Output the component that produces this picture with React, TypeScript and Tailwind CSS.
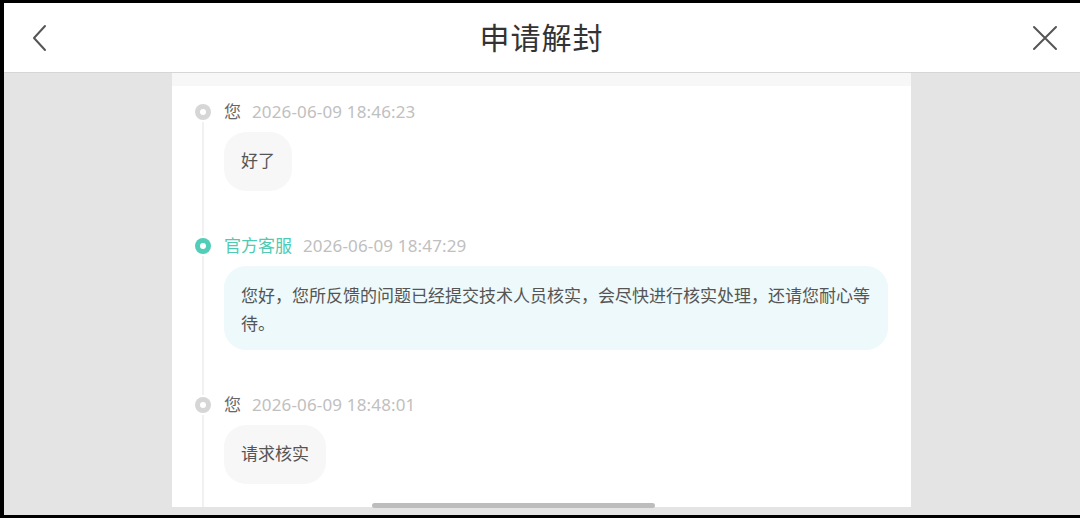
import React from "react";

type Msg = {
  who: string;
  staff?: boolean;
  time: string;
  text: string;
};

const messages: Msg[] = [
  { who: "您", time: "2026-06-09 18:46:23", text: "好了" },
  {
    who: "官方客服",
    staff: true,
    time: "2026-06-09 18:47:29",
    text: "您好，您所反馈的问题已经提交技术人员核实，会尽快进行核实处理，还请您耐心等待。",
  },
  { who: "您", time: "2026-06-09 18:48:01", text: "请求核实" },
];

function Dot({ staff }: { staff?: boolean }) {
  return (
    <div
      className={`w-[16px] h-[16px] rounded-full flex items-center justify-center shrink-0 ${
        staff ? "bg-[#52cdb7]" : "bg-[#d6d6d6]"
      }`}
    >
      <div className="w-[6px] h-[6px] rounded-full bg-white" />
    </div>
  );
}

function Item({ m, last }: { m: Msg; last: boolean }) {
  return (
    <div className="flex">
      <div className="w-[16px] flex flex-col items-center shrink-0">
        <div className="h-[20px] flex items-center">
          <Dot staff={m.staff} />
        </div>
        <div className="w-[2px] flex-1 bg-[#f1f1f1]" />
      </div>
      <div className={`ml-[13px] flex flex-col items-start ${last ? "pb-[30px]" : "pb-[45px]"}`}>
        <div className="h-[20px] flex items-center text-[17px] leading-[20px]">
          <span className={m.staff ? "text-[#4fcab4]" : "text-[#666666]"}>{m.who}</span>
          <span className="ml-[11px] text-[#c0c0c0] tracking-[0.15px]">{m.time}</span>
        </div>
        <div
          className={`mt-[10px] rounded-[22px] px-[17px] text-[17px] leading-[28px] text-[#555555] ${
            m.staff
              ? "w-[664px] bg-[#edf9fa] pt-[16px] pb-[12px]"
              : "bg-[#f7f7f7] pt-[15px] pb-[16px]"
          }`}
        >
          {m.text}
        </div>
      </div>
    </div>
  );
}

export default function App() {
  return (
    <div
      className="w-[1080px] h-[518px] bg-black pt-[3px] pl-[4px] pb-[3px] overflow-hidden"
      style={{ fontFamily: '"Noto Sans", "Noto Sans CJK SC", sans-serif' }}
    >
      <div className="w-full h-full flex flex-col bg-[#e4e4e4]">
        {/* top bar */}
        <header className="h-[70px] shrink-0 bg-white border-b border-[#d6d6d6] flex items-center justify-between pl-[25px] pr-[20px]">
          <svg width="24" height="30" viewBox="0 0 24 30" fill="none">
            <path d="M16 3 L5 15 L16 27" stroke="#555" strokeWidth="2" strokeLinecap="round" strokeLinejoin="round" />
          </svg>
          <h1 className="text-[30px] leading-[36px] text-[#333333] tracking-[1px]">申请解封</h1>
          <svg width="30" height="30" viewBox="0 0 30 30" fill="none">
            <path d="M4 4 L26 26 M26 4 L4 26" stroke="#555" strokeWidth="2" strokeLinecap="round" />
          </svg>
        </header>

        {/* body */}
        <div className="relative flex-1 min-h-0 pb-[8px]">
          <div className="ml-[168px] w-[739px] h-full bg-white border-t-[13px] border-[#f7f7f7] pt-[16px] pl-[23px] overflow-hidden">
            {messages.map((m, i) => (
              <Item key={i} m={m} last={i === messages.length - 1} />
            ))}
          </div>
          {/* horizontal scroll indicator */}
          <div className="absolute left-[368px] bottom-[7px] w-[283px] h-[5px] rounded-full bg-[#bdbdbd]" />
        </div>
      </div>
    </div>
  );
}
